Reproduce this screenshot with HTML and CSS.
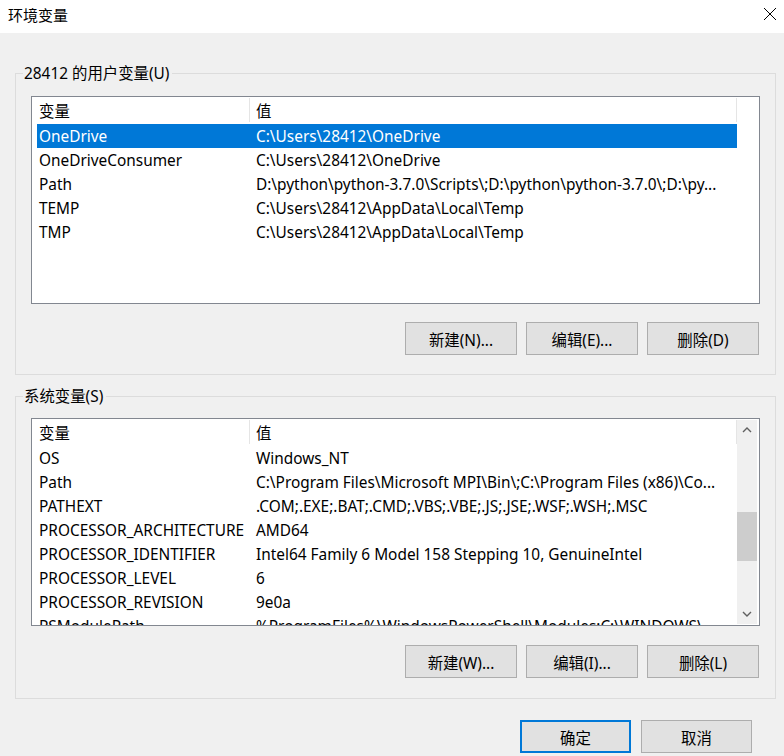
FILE: index.html
```html
<!DOCTYPE html>
<html lang="zh-CN">
<head>
  <meta charset="UTF-8">
  <title>环境变量</title>
  <link rel="stylesheet" href="styles.css">
</head>
<body>

  <!-- Title bar -->
  <div class="titlebar">
    <span class="title">环境变量</span>
    <svg class="close" width="14" height="14" viewBox="0 0 14 14">
      <path d="M1 1 L13 13 M13 1 L1 13" stroke="#000" stroke-width="1" fill="none"/>
    </svg>
  </div>

  <div class="dialog">

    <!-- User variables -->
    <fieldset class="group">
      <legend>28412 的用户变量(U)</legend>
      <div class="listview">
        <div class="lv-body">
          <div class="lv-header">
            <div class="hcell">变量</div>
            <div class="hcell">值</div>
          </div>
          <div class="lv-row selected"><span>OneDrive</span><span>C:\Users\28412\OneDrive</span></div>
          <div class="lv-row"><span>OneDriveConsumer</span><span>C:\Users\28412\OneDrive</span></div>
          <div class="lv-row"><span>Path</span><span>D:\python\python-3.7.0\Scripts\;D:\python\python-3.7.0\;D:\py...</span></div>
          <div class="lv-row"><span>TEMP</span><span>C:\Users\28412\AppData\Local\Temp</span></div>
          <div class="lv-row"><span>TMP</span><span>C:\Users\28412\AppData\Local\Temp</span></div>
        </div>
      </div>
      <div class="buttons">
        <button class="btn">新建(N)...</button>
        <button class="btn">编辑(E)...</button>
        <button class="btn">删除(D)</button>
      </div>
    </fieldset>

    <!-- System variables -->
    <fieldset class="group group-sys">
      <legend>系统变量(S)</legend>
      <div class="listview">
        <div class="lv-body">
          <div class="lv-header">
            <div class="hcell">变量</div>
            <div class="hcell">值</div>
          </div>
          <div class="lv-row"><span>OS</span><span>Windows_NT</span></div>
          <div class="lv-row"><span>Path</span><span>C:\Program Files\Microsoft MPI\Bin\;C:\Program Files (x86)\Co...</span></div>
          <div class="lv-row"><span>PATHEXT</span><span>.COM;.EXE;.BAT;.CMD;.VBS;.VBE;.JS;.JSE;.WSF;.WSH;.MSC</span></div>
          <div class="lv-row"><span>PROCESSOR_ARCHITECTURE</span><span>AMD64</span></div>
          <div class="lv-row"><span>PROCESSOR_IDENTIFIER</span><span>Intel64 Family 6 Model 158 Stepping 10, GenuineIntel</span></div>
          <div class="lv-row"><span>PROCESSOR_LEVEL</span><span>6</span></div>
          <div class="lv-row"><span>PROCESSOR_REVISION</span><span>9e0a</span></div>
          <div class="lv-row"><span>PSModulePath</span><span>%ProgramFiles%\WindowsPowerShell\Modules;C:\WINDOWS\...</span></div>
        </div>
        <div class="scrollbar">
          <div class="sb-arrow">
            <svg width="10" height="6" viewBox="0 0 10 6"><path d="M1 5 L5 1 L9 5" stroke="#606060" stroke-width="1.4" fill="none"/></svg>
          </div>
          <div class="sb-track">
            <div class="sb-thumb"></div>
          </div>
          <div class="sb-arrow">
            <svg width="10" height="6" viewBox="0 0 10 6"><path d="M1 1 L5 5 L9 1" stroke="#606060" stroke-width="1.4" fill="none"/></svg>
          </div>
        </div>
      </div>
      <div class="buttons">
        <button class="btn">新建(W)...</button>
        <button class="btn">编辑(I)...</button>
        <button class="btn">删除(L)</button>
      </div>
    </fieldset>

    <!-- Dialog buttons -->
    <div class="footer">
      <button class="btn default">确定</button>
      <button class="btn">取消</button>
    </div>

  </div>

</body>
</html>
```

FILE: styles.css
```css
body {
  margin: 0;
  background-color: #f0f0f0;
  font-family: "Noto Sans", "Noto Sans CJK SC", sans-serif;
  font-size: 15.4px;
  color: #000;
}

.titlebar {
  height: 33px;
  background-color: #fff;
  display: flex;
  align-items: center;
  justify-content: space-between;
  padding: 0 7px 5px 8px;
  box-sizing: border-box;
}

.title {
  font-size: 15px;
}

.dialog {
  padding: 30px 8px 0 15px;
}

/* Group boxes */
.group {
  margin: 0;
  padding: 13px 15px 19px 15px;
  border: 1px solid #dcdcdc;
}

.group legend {
  margin-left: -8px;
  padding: 2px 3px 0 1px;
  line-height: 18px;
}

.group-sys {
  margin-top: 11px;
  padding-top: 12px;
  padding-bottom: 20px;
}

/* List views */
.listview {
  height: 208px;
  box-sizing: border-box;
  border: 1px solid #828790;
  background-color: #fff;
  display: flex;
  overflow: hidden;
}

.lv-body {
  flex: 1;
  padding-left: 5px;
  overflow: hidden;
}

.lv-header {
  display: grid;
  grid-template-columns: 213px 487px;
  width: 700px;
  height: 27px;
}

.hcell {
  height: 24px;
  margin-top: 1px;
  padding: 4px 0 0 2px;
  line-height: 19px;
  box-sizing: border-box;
  border-right: 1px solid #e5e5e5;
}

.hcell + .hcell {
  padding-left: 6px;
}

.lv-row {
  display: grid;
  grid-template-columns: 217px 483px;
  width: 700px;
  height: 24px;
  line-height: 23px;
  white-space: nowrap;
}

.lv-row span {
  padding: 1px 0 0 2px;
  overflow: hidden;
  text-overflow: ellipsis;
}

.lv-row.selected {
  background-color: #0078d7;
  color: #fff;
}

/* Scroll bar */
.scrollbar {
  width: 20px;
  margin: 1px 2px 1px 0;
  background-color: #f0f0f0;
  display: flex;
  flex-direction: column;
}

.sb-arrow {
  height: 20px;
  display: flex;
  align-items: center;
  justify-content: center;
}

.sb-track {
  flex: 1;
  padding-top: 72px;
}

.sb-thumb {
  height: 49px;
  background-color: #cdcdcd;
}

/* Buttons */
.buttons {
  display: flex;
  justify-content: flex-end;
  gap: 9px;
  margin-top: 18px;
  margin-right: 1px;
}

.group-sys .buttons {
  margin-top: 19px;
}

.btn {
  width: 112px;
  height: 33px;
  border: 1px solid #adadad;
  background-color: #e1e1e1;
  font-family: inherit;
  font-size: 15.4px;
  color: #000;
  padding: 2px 0 0;
}

.btn.default {
  border: 2px solid #0078d7;
}

.footer {
  display: flex;
  justify-content: flex-end;
  gap: 10px;
  margin-top: 21px;
  padding-right: 24px;
}

.footer .btn {
  width: 111px;
}
```
